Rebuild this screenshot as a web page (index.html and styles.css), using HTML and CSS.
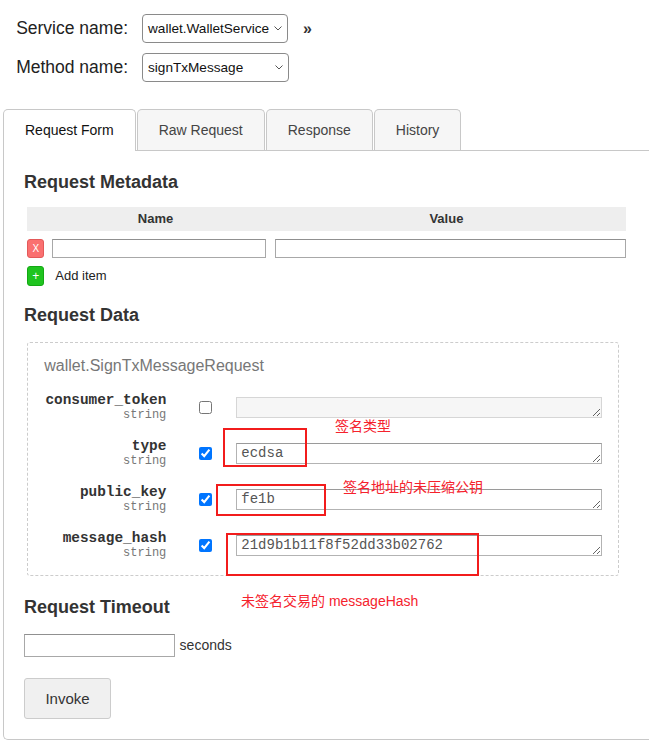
FILE: index.html
```html
<!DOCTYPE html>
<html lang="zh-CN">
<head>
<meta charset="utf-8">
<title>gRPC UI</title>
<link rel="stylesheet" href="styles.css">
</head>
<body>
<div class="selectors">
  <label class="sel-label">Service name:</label>
  <div class="select"><span>wallet.WalletService</span><svg class="chev" width="8" height="5" viewBox="0 0 8 5"><path d="M0.5 0.5 L4 4 L7.5 0.5" fill="none" stroke="#555" stroke-width="1"/></svg></div>
  <span class="expand">&raquo;</span>
  <label class="sel-label">Method name:</label>
  <div class="select method"><span>signTxMessage</span><svg class="chev" width="8" height="5" viewBox="0 0 8 5"><path d="M0.5 0.5 L4 4 L7.5 0.5" fill="none" stroke="#555" stroke-width="1"/></svg></div>
</div>

<div class="tabs">
  <div class="tab active">Request Form</div>
  <div class="tab">Raw Request</div>
  <div class="tab">Response</div>
  <div class="tab">History</div>
</div>

<div class="panel">
  <h2 class="section-title">Request Metadata</h2>
  <div class="meta-table">
    <div class="meta-head"><span></span><span>Name</span><span>Value</span></div>
    <div class="meta-row">
      <button class="btn-del">X</button>
      <input class="meta-input meta-name" type="text">
      <input class="meta-input meta-value" type="text">
    </div>
    <div class="meta-add"><button class="btn-add">+</button><span class="add-label">Add item</span></div>
  </div>

  <h2 class="section-title data-title">Request Data</h2>
  <div class="msg-box">
    <div class="msg-title">wallet.SignTxMessageRequest</div>
    <div class="fields">
      <div class="field">
        <div class="field-label"><div class="field-name">consumer_token</div><div class="field-type">string</div></div>
        <div class="field-check"><input type="checkbox"></div>
        <textarea class="field-value unset" rows="1" readonly></textarea>
      </div>
      <div class="field">
        <div class="field-label"><div class="field-name">type</div><div class="field-type">string</div></div>
        <div class="field-check"><input type="checkbox" checked></div>
        <textarea class="field-value" rows="1">ecdsa</textarea>
      </div>
      <div class="field">
        <div class="field-label"><div class="field-name">public_key</div><div class="field-type">string</div></div>
        <div class="field-check"><input type="checkbox" checked></div>
        <textarea class="field-value" rows="1">fe1b</textarea>
      </div>
      <div class="field">
        <div class="field-label"><div class="field-name">message_hash</div><div class="field-type">string</div></div>
        <div class="field-check"><input type="checkbox" checked></div>
        <textarea class="field-value" rows="1">21d9b1b11f8f52dd33b02762</textarea>
      </div>
    </div>
  </div>

  <h2 class="section-title timeout-title">Request Timeout</h2>
  <div class="timeout-row"><input class="timeout-input" type="text"> <span class="seconds">seconds</span></div>
  <button class="invoke">Invoke</button>
</div>

<div class="mark mark-type"></div>
<div class="mark mark-key"></div>
<div class="mark mark-hash"></div>
<div class="note note-type">签名类型</div>
<div class="note note-key">签名地址的未压缩公钥</div>
<div class="note note-hash">未签名交易的 messageHash</div>
</body>
</html>
```
FILE: styles.css
```css
html {
  overflow: hidden;
}
body {
  margin: 0;
  background: #fff;
  color: #333;
  font-family: "Liberation Sans", Arial, "Noto Sans CJK SC", sans-serif;
}

/* service / method selectors */
.selectors {
  display: grid;
  grid-template-columns: 128px 146px auto;
  column-gap: 14px;
  row-gap: 10px;
  align-items: center;
  justify-content: start;
  margin-top: 14px;
}
.sel-label {
  font-size: 17.5px;
  text-align: right;
  color: #222;
}
.select {
  height: 29px;
  box-sizing: border-box;
  border: 1px solid #8a8a8a;
  border-radius: 4px;
  display: flex;
  align-items: center;
  justify-content: space-between;
  padding: 0 5px 0 5px;
  font-size: 13.6px;
  color: #111;
  background: #fff;
  white-space: nowrap;
}
.select.method {
  width: 147px;
}
.chev {
  display: block;
  flex: none;
}
.expand {
  font-weight: bold;
  font-size: 16px;
  color: #333;
  margin-left: 1px;
}

/* tabs */
.tabs {
  display: flex;
  align-items: flex-start;
  margin: 27px 0 0 3px;
  position: relative;
  z-index: 1;
}
.tab {
  height: 40px;
  line-height: 40px;
  padding: 0 21px;
  border: 1px solid #c8c8c8;
  border-bottom: 0;
  border-radius: 5px 5px 0 0;
  background: #f6f6f6;
  font-size: 14px;
  color: #444;
  margin-right: 1px;
}
.tab.active {
  background: #fff;
  color: #111;
  height: 41px;
  margin-bottom: -1px;
}

/* panel */
.panel {
  margin-left: 3px;
  border: 1px solid #c8c8c8;
  border-right: 0;
  border-radius: 0 0 0 5px;
  padding: 19.5px 0 20px 20px;
}
.section-title {
  margin: 0;
  font-size: 18px;
  line-height: 22px;
  font-weight: bold;
  color: #333;
}

/* metadata table */
.meta-table {
  margin: 14.2px 0 0 3.3px;
  width: 598.5px;
}
.meta-head,
.meta-row {
  display: grid;
  grid-template-columns: 16.7px 223px 1fr;
}
.meta-head {
  height: 24px;
  line-height: 24px;
  background: #eeeeee;
  font-size: 13px;
  font-weight: bold;
  text-align: center;
  color: #333;
}
.meta-row {
  padding-top: 8px;
  align-items: start;
}
.btn-del,
.btn-add {
  width: 17px;
  height: 19px;
  padding: 0;
  margin: 0;
  border-radius: 3px;
  color: #fff;
  font-family: "Liberation Sans", Arial, sans-serif;
  display: flex;
  align-items: center;
  justify-content: center;
}
.btn-del {
  background: #fa7070;
  border: 1px solid #e35959;
  font-size: 10px;
}
.btn-add {
  background: #1fc41f;
  border: 1px solid #14a814;
  font-size: 12px;
  height: 20px;
}
.meta-input {
  display: block;
  box-sizing: border-box;
  height: 19px;
  margin: 0 0 0 8px;
  border: 1px solid #a8a8a8;
  border-top-color: #909090;
  padding: 0 3px;
  background: #fff;
}
.meta-name {
  width: 214px;
}
.meta-value {
  width: calc(100% - 8px);
}
.meta-add {
  display: flex;
  align-items: center;
  gap: 11px;
  margin-top: 8.3px;
}
.add-label {
  font-size: 13px;
  color: #222;
}

/* request data */
.data-title {
  margin-top: 18.5px;
}
.msg-box {
  margin: 15.2px 0 0 3.3px;
  width: 591.4px;
  box-sizing: border-box;
  border: 1px dashed #cccccc;
  border-radius: 3px;
  padding: 14.3px 16px 14.7px 16px;
}
.msg-title {
  font-size: 16px;
  line-height: 18px;
  color: #777;
}
.fields {
  display: flex;
  flex-direction: column;
  gap: 16px;
  margin-top: 17px;
}
.field {
  display: grid;
  grid-template-columns: 122px 70px 1fr;
  align-items: start;
  height: 30px;
}
.field-label {
  text-align: right;
  font-family: "Liberation Mono", "Courier New", monospace;
}
.field-name {
  font-size: 14.4px;
  line-height: 16px;
  font-weight: bold;
  color: #333;
}
.field-type {
  font-size: 12px;
  line-height: 14px;
  color: #777;
}
.field-check {
  padding: 8.7px 0 0 32.7px;
}
.field-check input {
  display: block;
  width: 13px;
  height: 13px;
  margin: 0;
}
.field-value {
  display: block;
  box-sizing: border-box;
  width: 100%;
  height: 21px;
  margin: 4.7px 0 0 0;
  padding: 1px 4px;
  border: 1px solid #b3b3b3;
  border-top-color: #9a9a9a;
  font-family: "Liberation Mono", "Courier New", monospace;
  font-size: 14px;
  line-height: 17px;
  color: #555;
  background: #fff;
  overflow: hidden;
}
.field-value.unset {
  background: #f6f6f6;
  border-color: #d6d6d6;
}

/* timeout */
.timeout-title {
  margin-top: 20.3px;
}
.timeout-row {
  margin-top: 16px;
  display: flex;
  align-items: center;
  gap: 4.6px;
}
.timeout-input {
  box-sizing: border-box;
  width: 151px;
  height: 23px;
  margin: 0;
  border: 1px solid #a8a8a8;
  border-top-color: #909090;
  background: #fff;
}
.seconds {
  font-size: 14px;
  color: #333;
}
.invoke {
  display: block;
  margin-top: 21px;
  width: 87px;
  height: 41px;
  box-sizing: border-box;
  background: #f0f0f0;
  border: 1px solid #cccccc;
  border-radius: 3px;
  font-family: "Liberation Sans", Arial, sans-serif;
  font-size: 15px;
  color: #333;
}

/* red annotations drawn over the screenshot */
.mark {
  position: absolute;
  box-sizing: border-box;
  border: 2px solid #f21c1c;
}
.mark-type {
  left: 223px;
  top: 428px;
  width: 84px;
  height: 39px;
}
.mark-key {
  left: 216px;
  top: 484px;
  width: 110px;
  height: 32px;
}
.mark-hash {
  left: 226px;
  top: 533px;
  width: 253px;
  height: 43px;
}
.note {
  position: absolute;
  color: #f5222d;
  font-size: 14px;
  line-height: 16px;
  font-family: "Liberation Sans", "Noto Sans CJK SC", sans-serif;
  white-space: nowrap;
}
.note-type {
  left: 335px;
  top: 418px;
}
.note-key {
  left: 343px;
  top: 479px;
}
.note-hash {
  left: 241px;
  top: 593px;
}
```
